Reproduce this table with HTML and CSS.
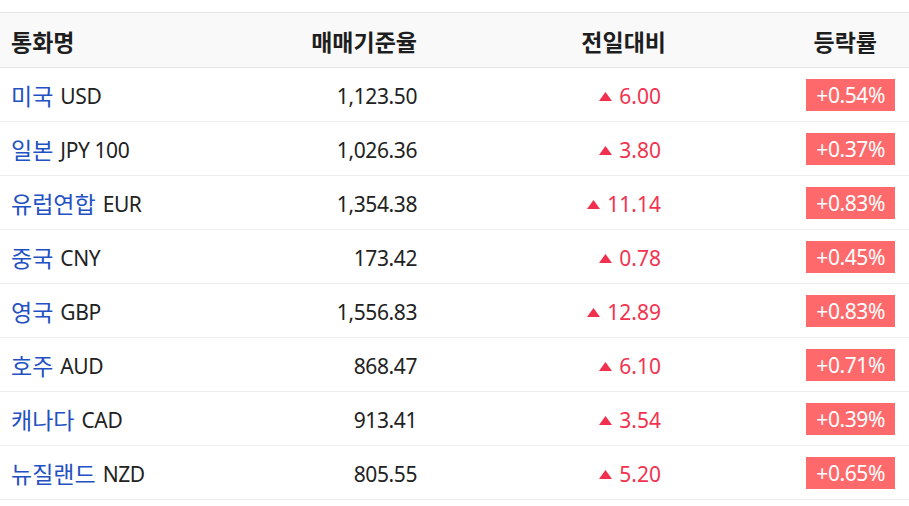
FILE: index.html
```html
<!DOCTYPE html>
<html lang="ko">
<head>
<meta charset="utf-8">
<link rel="stylesheet" href="styles.css">
</head>
<body>
<div class="table">
  <div class="row head">
    <div class="c name">통화명</div>
    <div class="c rate">매매기준율</div>
    <div class="c chg hchg">전일대비</div>
    <div class="c pct hpct">등락률</div>
  </div>
  <div class="row">
    <div class="c name"><span class="ko">미국</span>USD</div>
    <div class="c rate">1,123.50</div>
    <div class="c chg"><svg class="up" width="13" height="9" viewBox="0 0 13 9"><path d="M6.5 0 L13 9 L0 9 Z"/></svg>6.00</div>
    <div class="c pct"><span class="badge">+0.54%</span></div>
  </div>
  <div class="row">
    <div class="c name"><span class="ko">일본</span>JPY 100</div>
    <div class="c rate">1,026.36</div>
    <div class="c chg"><svg class="up" width="13" height="9" viewBox="0 0 13 9"><path d="M6.5 0 L13 9 L0 9 Z"/></svg>3.80</div>
    <div class="c pct"><span class="badge">+0.37%</span></div>
  </div>
  <div class="row">
    <div class="c name"><span class="ko">유럽연합</span>EUR</div>
    <div class="c rate">1,354.38</div>
    <div class="c chg"><svg class="up" width="13" height="9" viewBox="0 0 13 9"><path d="M6.5 0 L13 9 L0 9 Z"/></svg>11.14</div>
    <div class="c pct"><span class="badge">+0.83%</span></div>
  </div>
  <div class="row">
    <div class="c name"><span class="ko">중국</span>CNY</div>
    <div class="c rate">173.42</div>
    <div class="c chg"><svg class="up" width="13" height="9" viewBox="0 0 13 9"><path d="M6.5 0 L13 9 L0 9 Z"/></svg>0.78</div>
    <div class="c pct"><span class="badge">+0.45%</span></div>
  </div>
  <div class="row">
    <div class="c name"><span class="ko">영국</span>GBP</div>
    <div class="c rate">1,556.83</div>
    <div class="c chg"><svg class="up" width="13" height="9" viewBox="0 0 13 9"><path d="M6.5 0 L13 9 L0 9 Z"/></svg>12.89</div>
    <div class="c pct"><span class="badge">+0.83%</span></div>
  </div>
  <div class="row">
    <div class="c name"><span class="ko">호주</span>AUD</div>
    <div class="c rate">868.47</div>
    <div class="c chg"><svg class="up" width="13" height="9" viewBox="0 0 13 9"><path d="M6.5 0 L13 9 L0 9 Z"/></svg>6.10</div>
    <div class="c pct"><span class="badge">+0.71%</span></div>
  </div>
  <div class="row">
    <div class="c name"><span class="ko">캐나다</span>CAD</div>
    <div class="c rate">913.41</div>
    <div class="c chg"><svg class="up" width="13" height="9" viewBox="0 0 13 9"><path d="M6.5 0 L13 9 L0 9 Z"/></svg>3.54</div>
    <div class="c pct"><span class="badge">+0.39%</span></div>
  </div>
  <div class="row">
    <div class="c name"><span class="ko">뉴질랜드</span>NZD</div>
    <div class="c rate">805.55</div>
    <div class="c chg"><svg class="up" width="13" height="9" viewBox="0 0 13 9"><path d="M6.5 0 L13 9 L0 9 Z"/></svg>5.20</div>
    <div class="c pct"><span class="badge">+0.65%</span></div>
  </div>
</div>
</body>
</html>
```
FILE: styles.css
```css
html, body {
  margin: 0;
  padding: 0;
  background: #fff;
}
body {
  font-family: "Noto Sans", "Noto Sans CJK KR", sans-serif;
  font-size: 21px;
  letter-spacing: -0.4px;
  color: #222;
}
.table {
  margin-top: 12px;
  width: 909px;
  border-top: 1px solid #e6e6e6;
}
.row {
  display: grid;
  grid-template-columns: 250px 167px 244px 248px;
  height: 53px;
  align-items: center;
  border-bottom: 1px solid #eeeeee;
}
.row.head {
  height: 54px;
  background: #f9f9f9;
  border-bottom: 1px solid #e6e6e6;
  font-weight: 700;
  font-size: 23px;
  letter-spacing: 0;
  color: #1e1e1e;
}
.c {
  white-space: nowrap;
  line-height: 1;
  padding-top: 3px;
}
.name {
  display: flex;
  align-items: center;
  padding-left: 11px;
}
.head .c {
  padding-top: 4px;
}
.ko {
  color: #2350c2;
  font-size: 23px;
  letter-spacing: 0;
  margin-right: 7px;
}
.rate {
  text-align: right;
}
.chg {
  display: flex;
  justify-content: flex-end;
  align-items: center;
  color: #f2334f;
  letter-spacing: 0;
}
.hchg {
  color: #1e1e1e;
  margin-right: -5px;
}
.up {
  fill: #f0304c;
  margin-right: 7px;
  margin-top: 1px;
}
.pct {
  display: flex;
  justify-content: flex-end;
  padding-right: 14px;
  padding-top: 0;
}
.hpct {
  padding-right: 32px;
}
.badge {
  display: inline-block;
  height: 32px;
  line-height: 32px;
  padding: 0 10px;
  background: #fe6a6b;
  color: #fff;
  margin-top: 1px;
}
```
